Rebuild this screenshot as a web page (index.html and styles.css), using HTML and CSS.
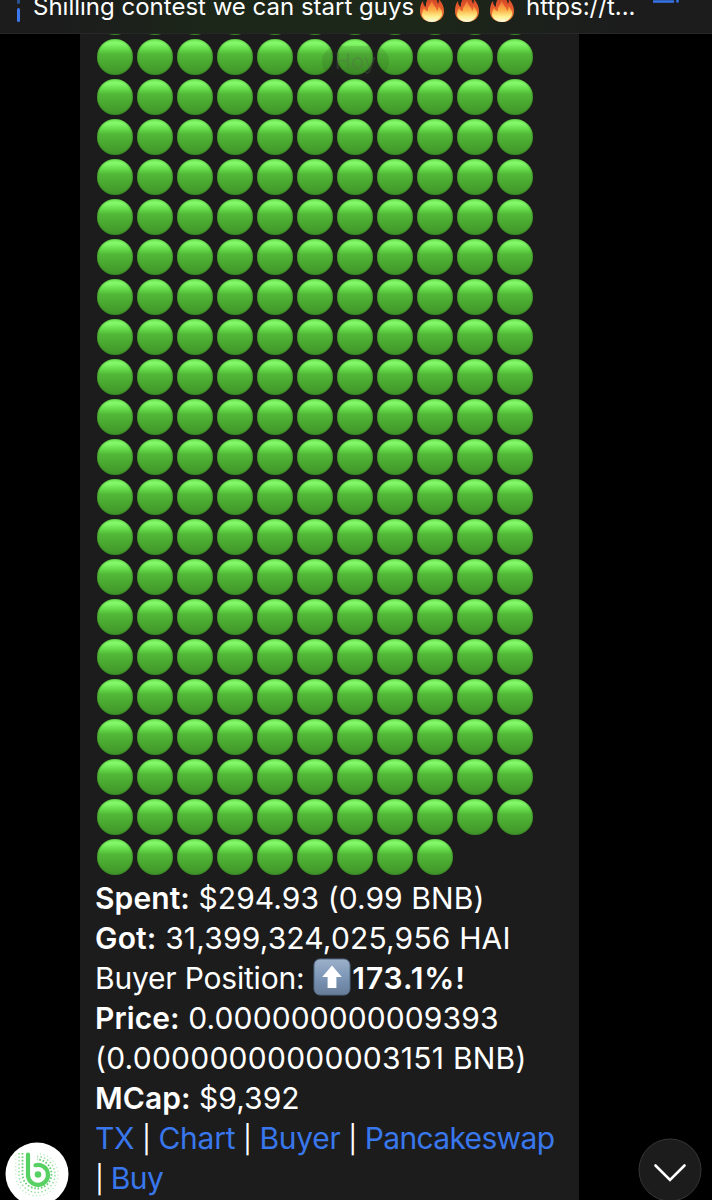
FILE: index.html
```html
<!DOCTYPE html>
<html lang="es">
<head>
    <meta charset="UTF-8">
    <meta name="viewport" content="width=device-width, initial-scale=1.0">
    <title>Chat</title>
    <link rel="stylesheet" href="styles.css">
</head>
<body>
    <svg class="defs" width="0" height="0">
        <defs>
            <linearGradient id="fireOuter" x1="0" y1="0" x2="0" y2="1">
                <stop offset="0" stop-color="#a83216"/>
                <stop offset="0.45" stop-color="#e2532c"/>
                <stop offset="1" stop-color="#f58a35"/>
            </linearGradient>
            <linearGradient id="fireInner" x1="0" y1="0" x2="0" y2="1">
                <stop offset="0" stop-color="#ee6a33"/>
                <stop offset="0.45" stop-color="#fbb046"/>
                <stop offset="0.75" stop-color="#ffee8c"/>
                <stop offset="1" stop-color="#fffbe0"/>
            </linearGradient>
            <symbol id="fire" viewBox="0 0 26 32">
                <path fill="url(#fireOuter)" d="M11 0C13 5 18 8 19 14C20 12 20 10 19 8C23 12 25 17 25 21C25 28 20 32 13 32C6 32 1 28 1 21C1 17 2 13 4 11C4 14 5 16 7 17C6 10 12 7 11 0Z"/>
                <path fill="url(#fireInner)" d="M13 10C13 15 18 17 18 21C19 20 20 18 19 16C22 19 24 22 23 25C21 29 18 32 13 32C8 32 4 29 3 25C3 22 4 20 5 18C6 20 7 21 9 21C8 17 12 15 13 10Z"/>
            </symbol>
        </defs>
    </svg>

    <header class="pinned">
        <div class="pin-bars"><i class="old"></i><i></i></div>
        <div class="pin-text">
            <span class="pin-title">Shilling contest we can start guys</span>
            <svg class="fire"><use href="#fire"/></svg>
            <svg class="fire"><use href="#fire"/></svg>
            <svg class="fire"><use href="#fire"/></svg>
            <span class="pin-link">https://t...</span>
        </div>
        <svg class="pin-icon" width="28" height="4" viewBox="0 0 28 4">
            <path d="M1 1.5H20M24.5 0V1.5" fill="none" stroke="#3673e8" stroke-width="2.6" stroke-linecap="round"/>
        </svg>
    </header>

    <main class="chat">
        <div class="message">
            <div class="dots" id="dots"></div>
            <div class="line spent"><b>Spent:</b> $294.93 (0.99 BNB)</div>
            <div class="line got"><b>Got:</b> 31,399,324,025,956 HAI</div>
            <div class="line"><span class="position">Buyer Position:</span>
                <svg class="up" width="38" height="38" viewBox="0 0 38 38">
                    <defs>
                        <linearGradient id="upBg" x1="0" y1="0" x2="0" y2="1">
                            <stop offset="0" stop-color="#9cb0c9"/>
                            <stop offset="0.5" stop-color="#7d97b7"/>
                            <stop offset="1" stop-color="#667c98"/>
                        </linearGradient>
                    </defs>
                    <rect x="1" y="1" width="36" height="36" rx="6" fill="url(#upBg)" stroke="#536983" stroke-width="1"/>
                    <path d="M19 7.5L28.8 19H23.4V30H14.6V19H9.2Z" fill="#fff"/>
                </svg><b class="percent">173.1%!</b></div>
            <div class="line price"><b>Price:</b> 0.000000000009393</div>
            <div class="line bnb">(0.00000000000003151 BNB)</div>
            <div class="line mcap"><b>MCap:</b> $9,392</div>
            <div class="line links"><a>TX</a> <i>|</i> <a>Chart</a> <i>|</i> <a>Buyer</a> <i>|</i> <a class="long">Pancakeswap</a></div>
            <div class="line links last"><i>|</i> <a>Buy</a></div>
        </div>

        <div class="day">Hoy</div>

        <svg class="avatar" width="64" height="64" viewBox="0 0 64 64">
            <circle cx="32" cy="32" r="31.5" fill="#fff"/>
            <g fill="none" stroke="#64cf72">
                <path d="M17.5 11V32A14.5 14.5 0 1 0 32 17.5" stroke-width="1.8" stroke-dasharray="1.6 1.8"/>
                <path d="M14 11V32A18 18 0 1 0 32 14.5" stroke-width="1.5" stroke-dasharray="1.4 2.2" opacity="0.7"/>
                <path d="M10.7 13V32A21.2 21.2 0 1 0 32 11.5" stroke-width="1.1" stroke-dasharray="1.1 2.6" opacity="0.5"/>
            </g>
            <path d="M23 12.5V32.5A10 10 0 1 0 30.5 23.2" fill="none" stroke="#57d163" stroke-width="4.2" stroke-linecap="round"/>
            <circle cx="33" cy="32.5" r="3.3" fill="#57d163"/>
        </svg>

        <svg class="scroll-down" width="64" height="64" viewBox="0 0 64 64">
            <circle cx="32" cy="32" r="31" fill="#1c1c1c" stroke="#363636" stroke-width="1"/>
            <path d="M17.5 27.5L32 42L46.5 27.5" fill="none" stroke="#fff" stroke-width="2.6" stroke-linecap="round"/>
        </svg>
    </main>

    <script>
        const dots = document.getElementById('dots');
        const total = 21 * 11 + 9;

        for (let i = 0; i < total; i++) {
            const dot = document.createElement('span');
            dot.className = 'dot';
            dots.appendChild(dot);
        }
    </script>
</body>
</html>
```
FILE: styles.css
```css
:root {
    --bubble: #1c1c1c;
    --link: #3977ec;
}

* {
    box-sizing: border-box;
}

body {
    margin: 0;
    height: 1200px;
    display: flex;
    flex-direction: column;
    overflow: hidden;
    background: #000;
    color: #fff;
    font-family: Inter, "Liberation Sans", sans-serif;
}

.defs {
    position: absolute;
}

.pinned {
    flex: none;
    height: 34px;
    display: flex;
    align-items: flex-start;
    overflow: hidden;
    padding-left: 17px;
    background: linear-gradient(to right, #1c1c1d 60px, #1c2619 200px, #1c2619 440px, #1c1c1d 620px);
    border-bottom: 1px solid #262827;
}

.pin-bars {
    width: 17px;
    display: flex;
    flex-direction: column;
    gap: 4px;
}

.pin-bars i {
    width: 3px;
    height: 14px;
    border-radius: 2px;
    background: #3b78f0;
}

.pin-bars .old {
    height: 4px;
    border-radius: 0 0 2px 2px;
    background: #2a5190;
}

.pin-text {
    width: 619px;
    display: flex;
    margin-top: -9px;
    font-size: 24px;
    line-height: 32px;
    white-space: nowrap;
}

.pin-title {
    width: 385px;
    margin-left: -1px;
    margin-right: 1px;
}

.fire {
    flex: none;
    width: 26px;
    height: 32px;
    margin-right: 9px;
    margin-top: -1px;
}

.pin-link {
    margin-left: 2px;
}

.chat {
    flex: 1;
    min-height: 0;
    position: relative;
    display: flex;
    overflow: hidden;
}

.message {
    width: 499px;
    margin-left: 80px;
    padding: 0 0 2px 15px;
    display: flex;
    flex-direction: column;
    justify-content: flex-end;
    background: var(--bubble);
}

.dots {
    flex: none;
    display: grid;
    grid-template-columns: repeat(11, 40px);
    grid-auto-rows: 40px;
}

.dot {
    width: 36px;
    height: 36px;
    margin: 1px 2px 3px;
    border-radius: 50%;
    background: linear-gradient(#73ee58 0%, #84f96b 12%, #69df4e 26%, #52b938 42%, #48a52e 72%, #40942a 100%);
    box-shadow: inset 0 0 2px rgba(40, 105, 20, 0.9);
}

.line {
    flex: none;
    height: 40px;
    font-size: 30px;
    line-height: 40px;
    white-space: nowrap;
}

.line b {
    font-weight: 600;
}

.spent {
    letter-spacing: 0.08px;
}

.got {
    letter-spacing: 0.16px;
}

.position {
    letter-spacing: -0.2px;
}

.percent {
    letter-spacing: 0.9px;
}

.price {
    letter-spacing: 0.1px;
}

.bnb {
    letter-spacing: 0.25px;
}

.up {
    margin: 0 1px;
    vertical-align: -7px;
}

.position + .up {
    margin-left: 0.5px;
}

.mcap {
    letter-spacing: 0.05px;
}

.links {
    letter-spacing: -0.25px;
    word-spacing: -0.5px;
}

.last {
    letter-spacing: -0.6px;
}

.links i {
    font-style: normal;
    font-size: 27px;
}

.links a {
    color: var(--link);
}

.links .long {
    letter-spacing: -0.65px;
}

.day {
    position: absolute;
    left: 322px;
    top: 12px;
    width: 67px;
    height: 31px;
    border-radius: 16px;
    background: rgba(30, 50, 25, 0.12);
    color: rgba(90, 110, 85, 0.32);
    font-size: 22px;
    line-height: 31px;
    text-align: center;
}

.avatar {
    position: absolute;
    left: 5px;
    bottom: -6px;
}

.scroll-down {
    position: absolute;
    right: 10px;
    bottom: -2px;
}
```
